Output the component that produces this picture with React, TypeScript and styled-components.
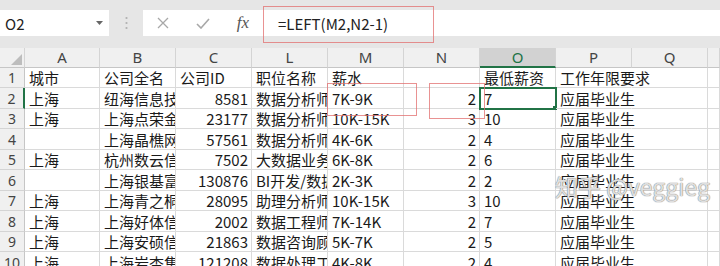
import React from "react";
import styled, { createGlobalStyle } from "styled-components";

const GlobalStyle = createGlobalStyle`
  html, body {
    margin: 0;
    padding: 0;
    background: #fff;
  }
  body {
    font-family: "Noto Sans CJK SC", "Noto Sans", sans-serif;
  }
`;

const Page = styled.div`
  width: 720px;
  height: 266px;
  overflow: hidden;
  position: relative;
  background: #e6e6e6;
`;

const Toolbar = styled.div`
  height: 48px;
  display: flex;
  align-items: center;
  background: #e6e6e6;
  box-sizing: border-box;
  padding-bottom: 2px;
`;

const NameBox = styled.div`
  width: 109px;
  height: 26px;
  background: #fff;
  display: flex;
  align-items: center;
  justify-content: space-between;
  padding: 0 6px 0 5px;
  box-sizing: border-box;
  font-size: 15px;
  color: #222;
`;

const Grip = styled.div`
  width: 34px;
  display: flex;
  justify-content: center;
`;

const FormulaBar = styled.div`
  flex: 1;
  height: 26px;
  background: #fff;
  display: flex;
  align-items: center;
`;

const IconSlot = styled.div`
  width: 40px;
  display: flex;
  justify-content: center;
  align-items: center;
`;

const Fx = styled.span`
  font-family: "Liberation Serif", serif;
  font-style: italic;
  font-size: 17px;
  color: #555;
`;

const FormulaText = styled.div`
  margin-left: 15px;
  font-size: 15px;
  color: #222;
`;

const Sheet = styled.div`
  display: grid;
  grid-template-columns: 25px 75px repeat(8, 76px) 1fr;
  grid-template-rows: 20px 20px 21px 20px 21px 20px 21px 20px 21px 20px 21px;
  background: #fff;
  height: 218px;
  overflow: hidden;
`;

const ColHead = styled.div<{ $active?: boolean }>`
  background: ${(p) => (p.$active ? "#d2d2d2" : "#f0f0f0")};
  color: ${(p) => (p.$active ? "#217346" : "#444")};
  border-right: 1px solid #d4d4d4;
  border-bottom: ${(p) => (p.$active ? "2px solid #217346" : "1px solid #c6c6c6")};
  box-sizing: border-box;
  display: flex;
  align-items: center;
  justify-content: center;
  font-family: "Noto Sans", sans-serif;
  font-size: 15px;
  line-height: 1;
`;

const Corner = styled(ColHead)`
  align-items: flex-end;
  justify-content: flex-end;
  padding: 0 2px 2px 0;
`;

const RowHead = styled.div<{ $active?: boolean }>`
  background: #f0f0f0;
  color: #444;
  border-right: ${(p) => (p.$active ? "2px solid #217346" : "1px solid #c6c6c6")};
  border-bottom: 1px solid #d4d4d4;
  box-sizing: border-box;
  display: flex;
  align-items: center;
  justify-content: center;
  font-family: "Noto Sans", sans-serif;
  font-size: 14px;
`;

const Cell = styled.div<{ $right?: boolean; $spill?: boolean; $selected?: boolean }>`
  position: relative;
  box-sizing: border-box;
  border-right: ${(p) => (p.$spill ? "1px solid transparent" : "1px solid #dadada")};
  border-bottom: 1px solid #dadada;
  display: flex;
  align-items: flex-end;
  justify-content: ${(p) => (p.$right ? "flex-end" : "flex-start")};
  padding: 0 3px 0 4px;
  overflow: ${(p) => (p.$spill ? "visible" : "hidden")};
  white-space: nowrap;
  font-size: 15px;
  line-height: 19px;
  color: #1a1a1a;
  z-index: ${(p) => (p.$spill || p.$selected ? 1 : 0)};
  outline: ${(p) => (p.$selected ? "2px solid #217346" : "none")};
  outline-offset: -1px;
  &::after {
    content: "";
    display: ${(p) => (p.$selected ? "block" : "none")};
    position: absolute;
    right: -4px;
    bottom: -4px;
    width: 5px;
    height: 5px;
    background: #217346;
    border: 1px solid #fff;
  }
`;

const Mark = styled.div`
  position: absolute;
  border: 1.5px solid rgba(226, 110, 110, 0.75);
  pointer-events: none;
  z-index: 5;
`;

const Watermark = styled.div`
  position: absolute;
  left: 555px;
  top: 175px;
  font-size: 23px;
  line-height: 1;
  color: rgba(250, 250, 250, 0.8);
  text-shadow: 0 0 1px #808080, 0 0 1px #808080;
  z-index: 6;
  white-space: nowrap;
`;

const columns = ["A", "B", "C", "L", "M", "N", "O", "P", "Q", ""];

type Row = [string, string, string, string, string, string, string, string];

const rows: Row[] = [
  ["城市", "公司全名", "公司ID", "职位名称", "薪水", "", "最低薪资", "工作年限要求"],
  ["上海", "纽海信息技术有限公司", "8581", "数据分析师", "7K-9K", "2", "7", "应届毕业生"],
  ["上海", "上海点荣金融信息服务", "23177", "数据分析师", "10K-15K", "3", "10", "应届毕业生"],
  ["", "上海晶樵网络信息技术", "57561", "数据分析师", "4K-6K", "2", "4", "应届毕业生"],
  ["上海", "杭州数云信息技术有限", "7502", "大数据业务分析师", "6K-8K", "2", "6", "应届毕业生"],
  ["", "上海银基富力信息技术", "130876", "BI开发/数据分析", "2K-3K", "2", "2", "应届毕业生"],
  ["上海", "上海青之桐投资管理", "28095", "助理分析师", "10K-15K", "3", "10", "应届毕业生"],
  ["上海", "上海好体信息科技有限", "2002", "数据工程师", "7K-14K", "2", "7", "应届毕业生"],
  ["上海", "上海安硕信息技术股份", "21863", "数据咨询顾问", "5K-7K", "2", "5", "应届毕业生"],
  ["上海", "上海岩杏集团有限公司", "121208", "数据处理工程师", "4K-8K", "2", "4", "应届毕业生"],
];

const numeric = new Set([2, 5]);

export default function App() {
  return (
    <Page>
      <GlobalStyle />
      <Toolbar>
        <NameBox>
          <span>O2</span>
          <svg width="7" height="4" viewBox="0 0 7 4">
            <path d="M0 0 L7 0 L3.5 4 Z" fill="#666" />
          </svg>
        </NameBox>
        <Grip>
          <svg width="3" height="14" viewBox="0 0 3 14">
            <circle cx="1.5" cy="2" r="1.1" fill="#b0b0b0" />
            <circle cx="1.5" cy="7" r="1.1" fill="#b0b0b0" />
            <circle cx="1.5" cy="12" r="1.1" fill="#b0b0b0" />
          </svg>
        </Grip>
        <FormulaBar>
          <IconSlot>
            <svg width="12" height="12" viewBox="0 0 12 12">
              <path d="M1 1 L11 11 M11 1 L1 11" stroke="#a8a8a8" strokeWidth="1.3" />
            </svg>
          </IconSlot>
          <IconSlot>
            <svg width="14" height="11" viewBox="0 0 14 11">
              <path d="M1 6 L5 10 L13 1" stroke="#a8a8a8" strokeWidth="1.6" fill="none" />
            </svg>
          </IconSlot>
          <IconSlot>
            <Fx>fx</Fx>
          </IconSlot>
          <FormulaText>=LEFT(M2,N2-1)</FormulaText>
        </FormulaBar>
      </Toolbar>
      <Sheet>
        <Corner>
          <svg width="11" height="11" viewBox="0 0 11 11">
            <path d="M11 0 L11 11 L0 11 Z" fill="#bdbdbd" />
          </svg>
        </Corner>
        {columns.map((c, i) => (
          <ColHead key={i} $active={c === "O"}>
            {c}
          </ColHead>
        ))}
        {rows.map((r, ri) => (
          <React.Fragment key={ri}>
            <RowHead $active={ri === 1}>{ri + 1}</RowHead>
            {r.map((v, ci) => (
              <Cell
                key={ci}
                $right={ri > 0 && numeric.has(ci)}
                $spill={ci === 7}
                $selected={ri === 1 && ci === 6}
              >
                {v}
              </Cell>
            ))}
            <Cell />
            <Cell />
          </React.Fragment>
        ))}
      </Sheet>
      <Mark style={{ left: 263, top: 6, width: 169, height: 35 }} />
      <Mark style={{ left: 327, top: 83, width: 88, height: 31 }} />
      <Mark style={{ left: 429, top: 83, width: 54, height: 34 }} />
      <Watermark>知乎 @veggieg</Watermark>
    </Page>
  );
}
